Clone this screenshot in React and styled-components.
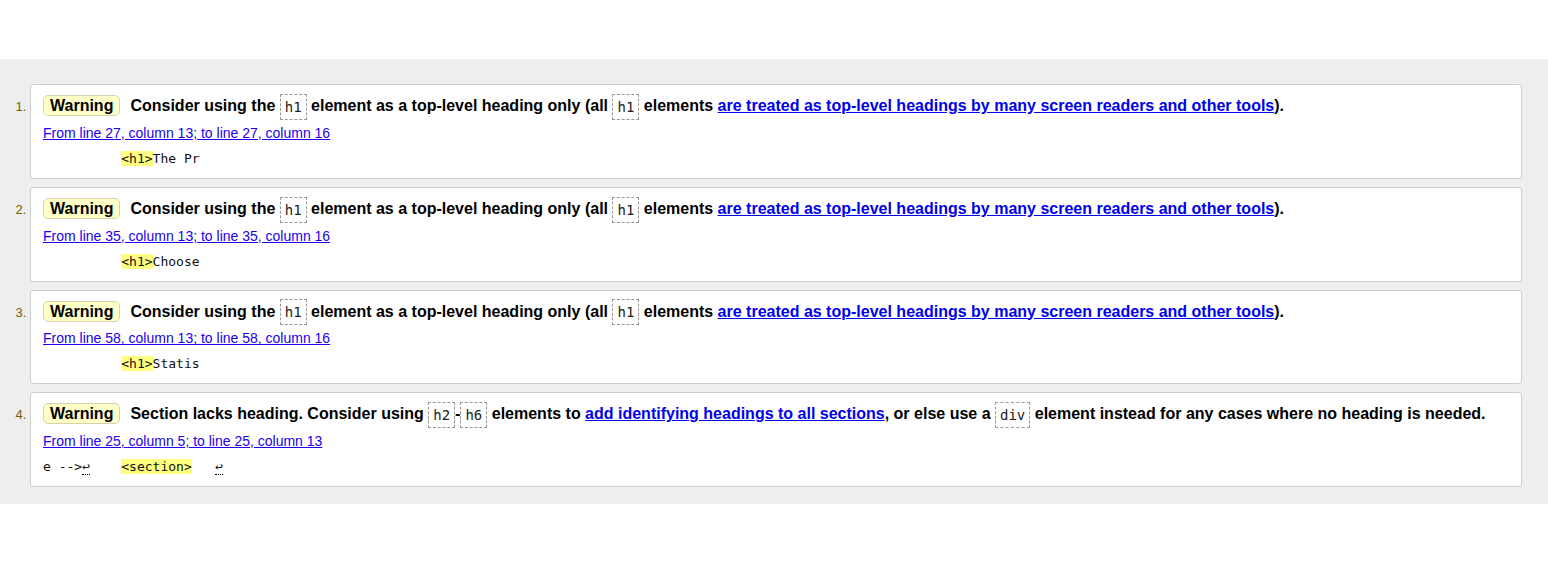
import React from 'react'
import styled, { createGlobalStyle } from 'styled-components'

const GlobalStyle = createGlobalStyle`
  html, body {
    margin: 0;
    padding: 0;
    background: #fff;
  }
  body {
    font-family: "Liberation Sans", Arial, sans-serif;
    color: #000;
  }
`

const Page = styled.main`
  padding-top: 59px;
`

const Results = styled.ol`
  margin: 0;
  padding: 25px 26px 17px 30px;
  background: #eeeeee;
  list-style: decimal outside;
`

const Message = styled.li`
  margin: 0 0 8px;
  padding: 8px 12px 11px;
  background: #fff;
  border: 1px solid #cccccc;
  border-radius: 3px;

  &:last-child {
    margin-bottom: 0;
  }

  &::marker {
    color: #7a5c00;
    font-size: 13px;
  }
`

const Title = styled.p`
  margin: 0;
  font-size: 16px;
  font-weight: bold;
  line-height: 26px;
`

const Badge = styled.strong`
  display: inline-block;
  margin-right: 10px;
  padding: 0 6px;
  line-height: 19px;
  background: #ffffc8;
  border: 1px solid #d6d2ac;
  border-radius: 5px;
`

const Code = styled.code`
  display: inline-block;
  padding: 0 4px;
  font-family: "DejaVu Sans Mono", "Liberation Mono", monospace;
  font-size: 14px;
  font-weight: normal;
  line-height: 24px;
  color: #222;
  border: 1px dashed #999999;
  vertical-align: middle;
`

const Link = styled.a`
  color: #0000ee;
  text-decoration: underline;
`

const Location = styled.p`
  margin: 4px 0 0;
  font-size: 14px;
  line-height: 18px;

  a {
    color: #2200ee;
  }
`

const Extract = styled.pre`
  margin: 9px 0 0;
  font-family: "DejaVu Sans Mono", "Liberation Mono", monospace;
  font-size: 13px;
  line-height: 16px;
  color: #111;
`

const Mark = styled.mark`
  background: #ffff80;
  color: #111;
`

const LineFeed = styled.span`
  border-bottom: 1px dotted #000;
`

const h1Message = (
  <>
    Consider using the <Code>h1</Code> element as a top-level heading only (all{' '}
    <Code>h1</Code> elements{' '}
    <Link href="#">are treated as top-level headings by many screen readers and other tools</Link>).
  </>
)

const messages = [
  {
    title: h1Message,
    location: 'From line 27, column 13; to line 27, column 16',
    extract: (
      <>
        {'          '}
        <Mark>{'<h1>'}</Mark>
        The Pr
      </>
    ),
  },
  {
    title: h1Message,
    location: 'From line 35, column 13; to line 35, column 16',
    extract: (
      <>
        {'          '}
        <Mark>{'<h1>'}</Mark>
        Choose
      </>
    ),
  },
  {
    title: h1Message,
    location: 'From line 58, column 13; to line 58, column 16',
    extract: (
      <>
        {'          '}
        <Mark>{'<h1>'}</Mark>
        Statis
      </>
    ),
  },
  {
    title: (
      <>
        Section lacks heading. Consider using <Code>h2</Code>-<Code>h6</Code> elements to{' '}
        <Link href="#">add identifying headings to all sections</Link>, or else use a{' '}
        <Code>div</Code> element instead for any cases where no heading is needed.
      </>
    ),
    location: 'From line 25, column 5; to line 25, column 13',
    extract: (
      <>
        {'e -->'}
        <LineFeed>↩</LineFeed>
        {'    '}
        <Mark>{'<section>'}</Mark>
        {'   '}
        <LineFeed>↩</LineFeed>
      </>
    ),
  },
]

export default function App() {
  return (
    <Page>
      <GlobalStyle />
      <Results>
        {messages.map(({ title, location, extract }) => (
          <Message key={location}>
            <Title>
              <Badge>Warning</Badge>
              {title}
            </Title>
            <Location>
              <a href="#">{location}</a>
            </Location>
            <Extract>{extract}</Extract>
          </Message>
        ))}
      </Results>
    </Page>
  )
}
